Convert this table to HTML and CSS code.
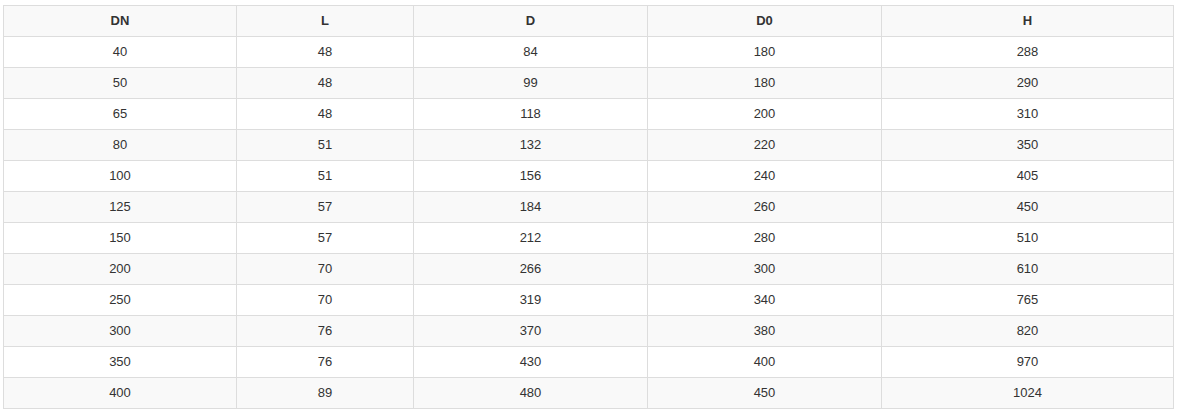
FILE: index.html
```html
<!DOCTYPE html>
<html>
<head>
<meta charset="utf-8">
<link rel="stylesheet" href="styles.css">
</head>
<body>
<table class="spec">
<colgroup>
<col class="c1"><col class="c2"><col class="c3"><col class="c4"><col class="c5">
</colgroup>
<thead>
<tr><th>DN</th><th>L</th><th>D</th><th>D0</th><th>H</th></tr>
</thead>
<tbody>
<tr><td>40</td><td>48</td><td>84</td><td>180</td><td>288</td></tr>
<tr><td>50</td><td>48</td><td>99</td><td>180</td><td>290</td></tr>
<tr><td>65</td><td>48</td><td>118</td><td>200</td><td>310</td></tr>
<tr><td>80</td><td>51</td><td>132</td><td>220</td><td>350</td></tr>
<tr><td>100</td><td>51</td><td>156</td><td>240</td><td>405</td></tr>
<tr><td>125</td><td>57</td><td>184</td><td>260</td><td>450</td></tr>
<tr><td>150</td><td>57</td><td>212</td><td>280</td><td>510</td></tr>
<tr><td>200</td><td>70</td><td>266</td><td>300</td><td>610</td></tr>
<tr><td>250</td><td>70</td><td>319</td><td>340</td><td>765</td></tr>
<tr><td>300</td><td>76</td><td>370</td><td>380</td><td>820</td></tr>
<tr><td>350</td><td>76</td><td>430</td><td>400</td><td>970</td></tr>
<tr><td>400</td><td>89</td><td>480</td><td>450</td><td>1024</td></tr>
</tbody>
</table>
</body>
</html>
```
FILE: styles.css
```css
html, body {
  margin: 0;
  padding: 0;
  background: #fff;
}
body {
  padding: 5px 0 0 3px;
  font-family: "Liberation Sans", Arial, sans-serif;
  font-size: 13px;
  color: #333;
}
.spec {
  border-collapse: collapse;
  table-layout: fixed;
  width: 1170px;
}
.c1 { width: 233px; }
.c2 { width: 177px; }
.c3 { width: 234px; }
.c4 { width: 234px; }
.c5 { width: 292px; }
.spec th, .spec td {
  border: 1px solid #ddd;
  height: 31px;
  padding: 0 8px;
  text-align: center;
  vertical-align: middle;
  line-height: 16px;
  box-sizing: border-box;
}
.spec th {
  font-weight: bold;
  background: #f9f9f9;
}
.spec tbody tr:nth-child(even) td {
  background: #f9f9f9;
}
```
